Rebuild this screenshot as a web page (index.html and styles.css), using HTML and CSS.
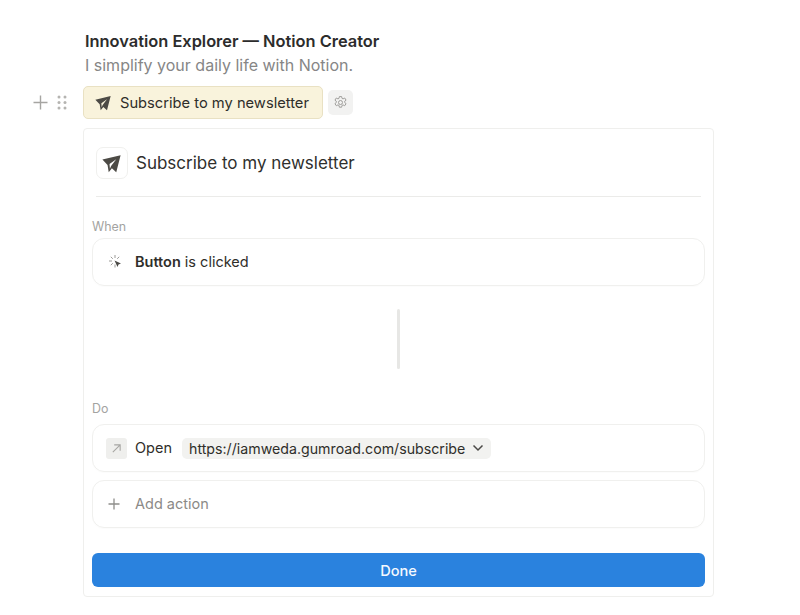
FILE: index.html
```html
<!DOCTYPE html>
<html lang="en">
<head>
<meta charset="utf-8">
<title>Subscribe to my newsletter</title>
<link rel="stylesheet" href="styles.css">
</head>
<body>
<main class="page">
  <div class="intro">
    <h1 class="heading">Innovation Explorer — Notion Creator</h1>
    <p class="subheading">I simplify your daily life with Notion.</p>
  </div>
  <div class="block-row">
    <svg class="gutter-plus" viewBox="0 0 15 15" aria-hidden="true"><path d="M7.5 0.5V14.5M0.5 7.5H14.5"/></svg>
    <svg class="gutter-dots" viewBox="0 0 10 15" aria-hidden="true"><circle cx="2" cy="2" r="1.5"/><circle cx="8" cy="2" r="1.5"/><circle cx="2" cy="7.5" r="1.5"/><circle cx="8" cy="7.5" r="1.5"/><circle cx="2" cy="13" r="1.5"/><circle cx="8" cy="13" r="1.5"/></svg>
    <button class="newsletter-button">
      <svg class="plane plane-small" viewBox="0 0 24 24" aria-hidden="true"><path class="plane-body" d="M.5 7 23.500 1.500 18 23 12.500 18 8.500 23 7 14Z"/><path class="plane-fold-button" d="M9.500 12.500 18 6.500 11.500 15 10 18.500Z"/></svg>
      <span>Subscribe to my newsletter</span>
    </button>
    <span class="gear-button">
      <svg class="gear" viewBox="0 0 24 24" aria-hidden="true"><path d="M10.2 2.5h3.6l.6 2.9 1.7.8 2.6-1.4 2.2 3.4-2.2 1.8v2l2.2 1.8-2.2 3.4-2.6-1.4-1.7.8-.6 2.9h-3.6l-.6-2.9-1.7-.8-2.6 1.4-2.2-3.4 2.2-1.8v-2L3.1 8.2l2.2-3.4 2.6 1.4 1.7-.8z"/><circle cx="12" cy="12" r="3.2"/></svg>
    </span>
  </div>
  <section class="card">
    <header class="card-header">
      <span class="icon-tile">
        <svg class="plane plane-large" viewBox="0 0 24 24" aria-hidden="true"><path class="plane-body" d="M.5 7 23.500 1.500 18 23 12.500 18 8.500 23 7 14Z"/><path class="plane-fold-card" d="M9.500 12.500 18 6.500 11.500 15 10 18.500Z"/></svg>
      </span>
      <h2 class="card-title">Subscribe to my newsletter</h2>
    </header>
    <div class="section-label when-label">When</div>
    <div class="row">
      <svg class="click-icon" viewBox="0 0 16 16" aria-hidden="true"><path class="click-rays" d="M7 1v3M7 10.5v3M1 7h3M2.800 2.800l2 2M11.200 2.800l-2 2M2.800 11.200l2-2"/><path class="click-arrow" d="M6.500 6.500 13 9.500 10.500 10.500 9.500 13Z"/></svg>
      <span class="row-text"><strong class="strong">Button</strong> is clicked</span>
    </div>
    <div class="connector"></div>
    <div class="section-label do-label">Do</div>
    <div class="row">
      <span class="arrow-tile">
        <svg class="arrow-icon" viewBox="0 0 12 12" aria-hidden="true"><path d="M2 10 10 2M3.500 2H10V8.500"/></svg>
      </span>
      <span class="row-text">Open</span>
      <span class="url-pill">https://iamweda.gumroad.com/subscribe
        <svg class="chevron" viewBox="0 0 12 8" aria-hidden="true"><path d="M1.500 1.500 6 6l4.500-4.500"/></svg>
      </span>
    </div>
    <div class="row row-add">
      <svg class="add-icon" viewBox="0 0 12 12" aria-hidden="true"><path d="M6 .5v11M.5 6h11"/></svg>
      <span class="row-text muted">Add action</span>
    </div>
    <button class="done">Done</button>
  </section>
</main>
</body>
</html>
```
FILE: styles.css
```css
* { box-sizing: border-box; }
html, body { margin: 0; padding: 0; background: #fff; }
body { font-family: Inter, "Liberation Sans", sans-serif; color: #2b2b2b; width: 800px; height: 615px; overflow: hidden; }
.page { padding: 30px 0 0 33px; display: flex; flex-direction: column; }
.intro { margin-left: 52px; }
.heading { margin: 0; font-size: 16.4px; line-height: 22px; font-weight: 600; color: #2c2c2c; }
.subheading { margin: 2px 0 0; font-size: 16px; line-height: 22px; color: #868686; }
.block-row { display: flex; align-items: center; margin-top: 10px; height: 33px; }
.gutter-plus { width: 15px; height: 15px; margin-right: 9px; fill: none; stroke: #a6a5a2; stroke-width: 1.4; }
.gutter-dots { width: 10px; height: 15px; margin-right: 16px; fill: #b5b4b1; }
.newsletter-button { display: flex; align-items: center; width: 240px; height: 33px; padding: 0 0 0 11px; background: #f9f3dc; border: 1px solid #e9e1c3; border-radius: 5px; font: 400 14.7px/20px Inter, "Liberation Sans", sans-serif; color: #2f2e2a; }
.plane { display: block; }
.plane-body { fill: #4c4a45; }
.plane-fold-button { fill: #f9f3dc; }
.plane-fold-card { fill: #fff; }
.plane-small { width: 16px; height: 16px; margin-right: 9px; }
.gear-button { display: flex; align-items: center; justify-content: center; width: 25px; height: 25px; margin-left: 5px; background: #f2f2f1; border-radius: 5px; }
.gear { width: 15px; height: 15px; fill: none; stroke: #a09f9c; stroke-width: 1.6; }
.card { width: 631px; height: 469px; margin: 9px 0 0 50px; padding: 0 8px; border: 1px solid #efefed; border-radius: 4px; background: #fff; }
.card-header { display: flex; align-items: center; height: 68px; margin: 0 4px; padding-top: 1px; border-bottom: 1px solid #ebebe9; }
.icon-tile { display: flex; align-items: center; justify-content: center; width: 32px; height: 32px; border: 1px solid #f0f0ee; border-radius: 7px; }
.plane-large { width: 19px; height: 19px; margin-right: 2px; }
.card-title { margin: 0 0 0 8px; font-size: 17px; line-height: 24px; font-weight: 400; color: #2f2f2d; }
.section-label { font-size: 12.4px; line-height: 16px; color: #a3a3a1; font-weight: 400; }
.when-label { margin-top: 22px; margin-bottom: 3px; }
.do-label { margin-bottom: 7px; }
.row { display: flex; align-items: center; height: 48px; padding-left: 15px; border: 1px solid #f0f0ee; border-radius: 12px; box-shadow: 0 1px 1px rgba(0,0,0,.015); }
.row-add { margin-top: 8px; }
.click-icon { width: 16px; height: 16px; margin-right: 11px; }
.click-rays { fill: none; stroke: #9b9a97; stroke-width: 1; }
.click-arrow { fill: #4b4a47; }
.row-text { font-size: 14.5px; line-height: 20px; color: #2f2e2a; }
.strong { font-weight: 600; }
.muted { color: #8b8a87; }
.connector { width: 3px; height: 60px; margin: 23px 0 32px 305px; background: #e7e7e5; border-radius: 2px; }
.arrow-tile { display: flex; align-items: center; justify-content: center; width: 21px; height: 21px; margin-right: 8px; margin-left: -2px; background: #efefed; border-radius: 3px; }
.arrow-icon { width: 11px; height: 11px; fill: none; stroke: #a7a6a3; stroke-width: 1.2; }
.url-pill { display: flex; align-items: center; height: 21px; margin-left: 10px; padding: 0 7px; background: #f2f2f0; border-radius: 5px; font-size: 14.2px; color: #2f2e2a; }
.chevron { width: 12px; height: 8px; margin-left: 7px; fill: none; stroke: #4a4946; stroke-width: 1.5; }
.add-icon { width: 12px; height: 12px; margin-right: 15px; fill: none; stroke: #8f8e8b; stroke-width: 1.3; }
.done { display: block; width: 613px; height: 34px; margin-top: 25px; padding: 1px 0 0; border: 0; border-radius: 6px; background: #2a82de; color: #f4f9fe; font: 500 14.6px/20px Inter, "Liberation Sans", sans-serif; }
```
